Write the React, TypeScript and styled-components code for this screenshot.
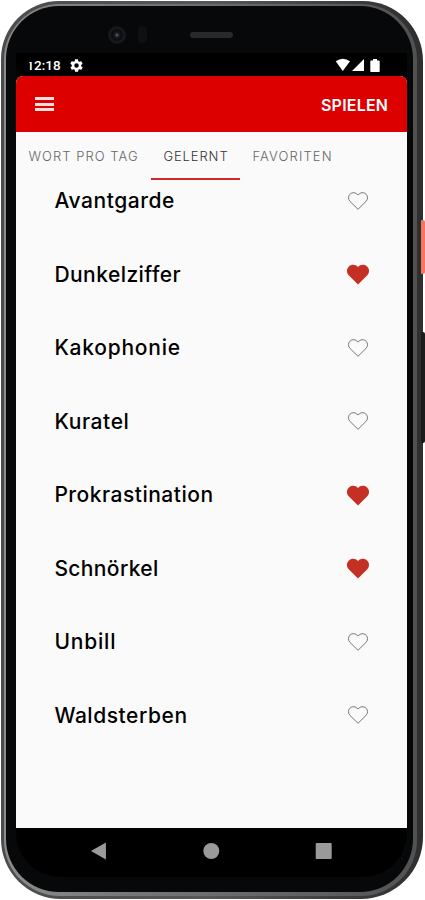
import React from 'react';
import styled, { createGlobalStyle } from 'styled-components';

const Global = createGlobalStyle`
  * { box-sizing: border-box; }
  body { margin: 0; background: #fff; font-family: "Inter", sans-serif; }
`;

const Stage = styled.main`
  position: relative;
  width: 425px;
  height: 900px;
  overflow: hidden;
  padding: 1px 2px 1px 1px;
`;

const SideKey = styled.i<{ $top: number; $height: number; $color: string }>`
  position: absolute;
  z-index: 1;
  right: 0;
  top: ${p => p.$top}px;
  width: 4px;
  height: ${p => p.$height}px;
  border-radius: 1px 2px 2px 1px;
  background: ${p => p.$color};
`;

const Rim = styled.div`
  position: relative;
  height: 898px;
  padding: 3px 6px 3px 3px;
  border-radius: 58px 60px 62px 60px;
  background: linear-gradient(90deg, #4c4c4c 0, #575757 50%, #2e2e30 100%);
`;

const Edge = styled.div`
  height: 100%;
  padding: 2px 4px 4px 2px;
  border-radius: 56px;
  background: linear-gradient(90deg, #8c8c8c 0, #777 30%, #5e5e5e 80%, #515151 100%);
`;

const Body = styled.div`
  height: 100%;
  display: flex;
  flex-direction: column;
  padding: 0 6px 0 10.4px;
  border-radius: 53px;
  background: #07080a;
  overflow: hidden;
`;

const Sensors = styled.div`
  height: 47px;
  flex: none;
  display: flex;
  align-items: center;
  padding: 10px 0 0 92px;
`;

const Camera = styled.i`
  width: 18px;
  height: 18px;
  border-radius: 50%;
  background: radial-gradient(circle, #687080 0, #1b1d22 2px, #090a0d 5px, #1b1b1d 7px, #151517 9px);
`;

const Proximity = styled.i`
  width: 9px;
  height: 17px;
  margin-left: 12px;
  border-radius: 4px;
  background: #101012;
`;

const Speaker = styled.i`
  width: 43px;
  height: 6px;
  margin-left: 43px;
  border-radius: 3px;
  background: #29292b;
`;

const StatusBar = styled.div`
  height: 23px;
  flex: none;
  display: flex;
  align-items: center;
  padding: 1px 26px 0 10px;
  background: #000;
  color: #fff;
`;

const Clock = styled.span`
  width: 35px;
  font: 500 13.5px/16px "Roboto", sans-serif;
  clip-path: polygon(3px 5px, 7px 5px, 7px 0, 100% 0, 100% 100%, 3px 100%);
`;

const SettingsIcon = styled.svg`
  width: 15px;
  height: 15px;
  margin-left: 8px;
`;

const SignalIcons = styled.svg`
  width: 46px;
  height: 16px;
  margin-left: auto;
`;

const Screen = styled.section`
  height: 751.5px;
  flex: none;
  display: flex;
  flex-direction: column;
  border-radius: 7px 7px 0 0;
  background: #fafafa;
  overflow: hidden;
`;

const AppBar = styled.header`
  height: 56px;
  flex: none;
  display: flex;
  align-items: center;
  justify-content: space-between;
  padding: 0 17px 0 19px;
  background: #dc0000;
  color: #fff;
`;

const MenuButton = styled.button`
  width: 19px;
  height: 14px;
  display: flex;
  flex-direction: column;
  justify-content: space-between;
  padding: 0;
  border: 0;
  background: none;
`;

const MenuLine = styled.i`
  height: 3px;
  background: #ffdede;
`;

const Label = styled.span<{ $spacing: number }>`
  display: inline-block;
  white-space: nowrap;
  letter-spacing: ${p => p.$spacing}px;
`;

const PlayButton = styled.button`
  width: 69px;
  padding: 1px 0 0;
  border: 0;
  background: none;
  color: #fff;
  font: 600 16px/20px "Inter", sans-serif;
  text-align: left;
`;

const Tabs = styled.nav`
  height: 48px;
  flex: none;
  display: flex;
`;

const Tab = styled.button<{ $width: number; $active?: boolean }>`
  width: ${p => p.$width}px;
  padding: 2px 0 0 12px;
  border: 0;
  border-bottom: 2px solid ${p => (p.$active ? '#d32626' : 'transparent')};
  background: none;
  color: ${p => (p.$active ? '#333' : '#666')};
  font: 300 13px/20px "Inter", sans-serif;
  text-align: left;
`;

const WordList = styled.ul`
  margin: 0;
  padding: 0;
  list-style: none;
`;

const WordRow = styled.li`
  height: 73.5px;
  display: flex;
  justify-content: space-between;
  padding: 7px 37px 0 38px;
`;

const Word = styled.span`
  color: #000;
  font: 450 21px/28px "Inter", sans-serif;
`;

const HeartIcon = styled.svg`
  width: 24px;
  height: 24px;
  margin-top: 1.5px;
`;

const NavBar = styled.footer`
  height: 49px;
  flex: none;
  background: #000;
  border-radius: 0 0 44px 44px;
`;

const NavIcons = styled.svg`
  display: block;
  width: 100%;
  height: 48px;
`;

const words = [
  { text: 'Avantgarde', spacing: 0.57, liked: false },
  { text: 'Dunkelziffer', spacing: 0.45, liked: true },
  { text: 'Kakophonie', spacing: 0.75, liked: false },
  { text: 'Kuratel', spacing: 0.6, liked: false },
  { text: 'Prokrastination', spacing: 0.5, liked: true },
  { text: 'Schnörkel', spacing: 0.37, liked: true },
  { text: 'Unbill', spacing: 0.8, liked: false },
  { text: 'Waldsterben', spacing: 0.55, liked: false },
];

function Heart({ liked }: { liked: boolean }) {
  return (
    <HeartIcon viewBox="0 0 24 24">
      {liked ? (
        <path
          d="M12 22.5 2.7 13.2C.4 10.7.3 7 2.7 4.7 5.3 2.1 9.5 2.2 12 4.9c2.5-2.7 6.7-2.8 9.3-.2 2.4 2.3 2.3 6 0 8.5Z"
          fill="#c53024"
        />
      ) : (
        <path
          d="M12 20.300 3.900 12.300C2 10.300 2 7.100 3.900 5.200 6.200 2.900 9.900 3.300 12 6.100c2.100-2.800 5.800-3.200 8.100-.9 1.900 1.900 1.900 5.100 0 7.100Z"
          fill="none"
          stroke="#777"
        />
      )}
    </HeartIcon>
  );
}

export default function App() {
  return (
    <>
      <Global />
      <Stage>
        <SideKey $top={220} $height={54} $color="#f4775c" />
        <SideKey $top={332} $height={111} $color="#1c1c1d" />
        <Rim>
          <Edge>
            <Body>
              <Sensors>
                <Camera />
                <Proximity />
                <Speaker />
              </Sensors>
              <StatusBar>
                <Clock>12:18</Clock>
                <SettingsIcon viewBox="0 0 24 24">
                  <path
                    fill="#fff"
                    fillRule="evenodd"
                    d="M19.4 13a7.6 7.6 0 0 0 0-2l2.1-1.6a.5.5 0 0 0 .1-.6l-2-3.5a.5.5 0 0 0-.6-.2l-2.5 1a7.3 7.3 0 0 0-1.7-1l-.4-2.6A.5.5 0 0 0 14 2h-4a.5.5 0 0 0-.5.4L9.1 5a7.3 7.3 0 0 0-1.7 1l-2.5-1a.5.5 0 0 0-.6.2l-2 3.5a.5.5 0 0 0 .1.6L4.6 11a7.6 7.6 0 0 0 0 2l-2.1 1.6a.5.5 0 0 0-.1.6l2 3.5c.1.2.4.3.6.2l2.5-1a7.3 7.3 0 0 0 1.7 1l.4 2.6c0 .3.2.5.5.5h4c.3 0 .5-.2.5-.5l.4-2.6a7.3 7.3 0 0 0 1.7-1l2.5 1c.2.1.5 0 .6-.2l2-3.5a.5.5 0 0 0-.1-.6ZM12 15.6a3.6 3.6 0 1 1 0-7.2 3.6 3.6 0 0 1 0 7.2Z"
                  />
                </SettingsIcon>
                <SignalIcons viewBox="0 0 46 16">
                  <path d="M.7 4.3Q7.8-.7 15 4.3L7.8 14Z" fill="#fff" />
                  <path d="M17 14 29 2V14Z" fill="#fff" />
                  <path d="M36 3.5h2V2h4v1.5h2q.7 0 .7.8v9.9q0 .8-.7.8h-8q-.7 0-.7-.8V4.3q0-.8.7-.8Z" fill="#fff" />
                </SignalIcons>
              </StatusBar>
              <Screen>
                <AppBar>
                  <MenuButton aria-label="Menü">
                    <MenuLine />
                    <MenuLine />
                    <MenuLine />
                  </MenuButton>
                  <PlayButton>
                    <Label $spacing={0.2}>SPIELEN</Label>
                  </PlayButton>
                </AppBar>
                <Tabs>
                  <Tab $width={135}>
                    <Label $spacing={1.05}>WORT PRO TAG</Label>
                  </Tab>
                  <Tab $width={89} $active>
                    <Label $spacing={0.9}>GELERNT</Label>
                  </Tab>
                  <Tab $width={105}>
                    <Label $spacing={1.15}>FAVORITEN</Label>
                  </Tab>
                </Tabs>
                <WordList>
                  {words.map(w => (
                    <WordRow key={w.text}>
                      <Word>
                        <Label $spacing={w.spacing}>{w.text}</Label>
                      </Word>
                      <Heart liked={w.liked} />
                    </WordRow>
                  ))}
                </WordList>
              </Screen>
              <NavBar>
                <NavIcons viewBox="0 0 391 48">
                  <path d="M75 23 90 14.5v17Z" fill="#9a9a9a" />
                  <circle cx="195.5" cy="23" r="8" fill="#9a9a9a" />
                  <rect x="300" y="15" width="16" height="16" rx="1" fill="#9a9a9a" />
                </NavIcons>
              </NavBar>
            </Body>
          </Edge>
        </Rim>
      </Stage>
    </>
  );
}
